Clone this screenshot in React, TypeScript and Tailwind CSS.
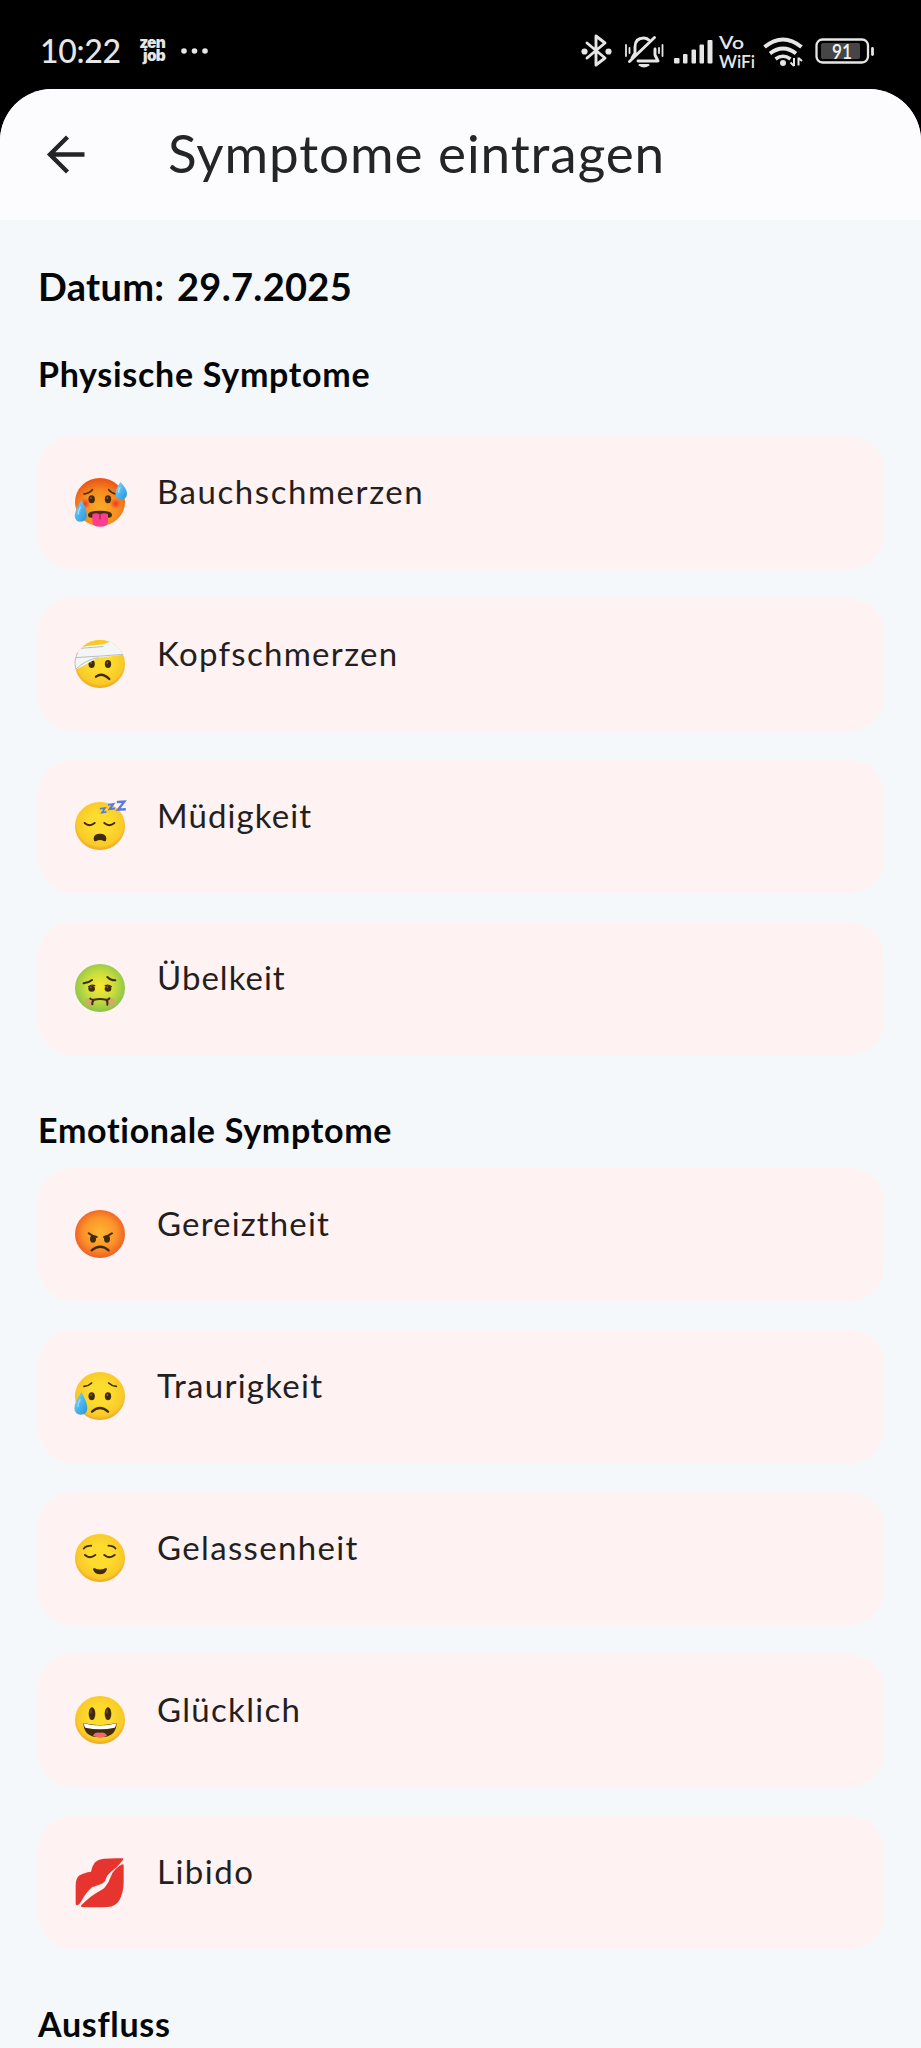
import React from "react";

const INK = "#422b0d";

function FaceGradients() {
  return (
    <svg width="0" height="0" className="absolute" aria-hidden="true">
      <defs>
        <radialGradient id="yellow" cx="50%" cy="45%" r="55%">
          <stop offset="0.4" stopColor="#fddc2e" />
          <stop offset="0.85" stopColor="#f9c928" />
          <stop offset="1" stopColor="#eda524" />
        </radialGradient>
        <radialGradient id="hot" cx="50%" cy="65%" r="62%">
          <stop offset="0.1" stopColor="#f9a825" />
          <stop offset="0.6" stopColor="#f68d20" />
          <stop offset="1" stopColor="#ea5818" />
        </radialGradient>
        <radialGradient id="angry" cx="50%" cy="48%" r="54%">
          <stop offset="0.1" stopColor="#fdb231" />
          <stop offset="0.6" stopColor="#fb9429" />
          <stop offset="1" stopColor="#ee5a24" />
        </radialGradient>
        <radialGradient id="sick" cx="50%" cy="46%" r="54%">
          <stop offset="0" stopColor="#fde62f" />
          <stop offset="0.5" stopColor="#cddf3c" />
          <stop offset="1" stopColor="#8bc34a" />
        </radialGradient>
        <radialGradient id="blush">
          <stop offset="0" stopColor="#f4352a" />
          <stop offset="1" stopColor="#f4352a" stopOpacity="0" />
        </radialGradient>
        <linearGradient id="drop" x1="0" y1="0" x2="1" y2="1">
          <stop offset="0" stopColor="#8fd8f8" />
          <stop offset="0.5" stopColor="#4fb5ee" />
          <stop offset="1" stopColor="#2196dd" />
        </linearGradient>
        <clipPath id="head">
          <ellipse cx="120" cy="108" rx="75" ry="72" />
        </clipPath>
      </defs>
    </svg>
  );
}

function Emoji({ children }: { children: React.ReactNode }) {
  return (
    <svg viewBox="0 0 240 210" className="h-[70px] w-20 shrink-0" fill="none" strokeLinecap="round" strokeLinejoin="round">
      {children}
    </svg>
  );
}

function Head({ fill }: { fill: string }) {
  return <ellipse cx="120" cy="108" rx="75" ry="72" fill={fill} />;
}

function Eyes({ y, rx = 9.5, ry = 12 }: { y: number; rx?: number; ry?: number }) {
  return (
    <>
      <ellipse cx="95" cy={y} rx={rx} ry={ry} fill={INK} />
      <ellipse cx="144" cy={y} rx={rx} ry={ry} fill={INK} />
      <ellipse cx="93" cy={y - 4} rx="2.5" ry="3" fill="#8a6340" />
      <ellipse cx="142" cy={y - 4} rx="2.5" ry="3" fill="#8a6340" />
    </>
  );
}

function HotFace() {
  return (
    <Emoji>
      <Head fill="url(#hot)" />
      <circle cx="75" cy="113" r="17" fill="url(#blush)" />
      <circle cx="167" cy="113" r="17" fill="url(#blush)" />
      <path d="M72 84q16-2 25-13M146 71q9 11 22 13" stroke={INK} strokeWidth="5" />
      <Eyes y={100} />
      <path d="M84 146q0-12 36-12t36 12q0 9-10 9-26-5-52 0-10 0-10-9z" fill={INK} />
      <path d="M97 144q11-5 23 1 12-6 24-1v23q0 15-24 15t-23-15z" fill="#fb3f8c" />
      <path d="M120 143v16" stroke="#b4135b" strokeWidth="3.5" />
      <path d="M181 48q-18 27-14 39 4 13 17 13 17-1 17-17 0-15-20-35z" fill="url(#drop)" />
      <path d="M65 102q-21 32-21 47 1 18 18 18 18 0 18-19 0-18-15-46z" fill="url(#drop)" />
      <path d="M61 124q-7 12-6 20M180 65q-5 8-4 14" stroke="#c6edfc" strokeWidth="4" opacity="0.7" />
    </Emoji>
  );
}

function BandagedFace() {
  return (
    <Emoji>
      <Head fill="url(#yellow)" />
      <Eyes y={108} />
      <path d="M108 146q18-14 40 7" stroke={INK} strokeWidth="7" />
      <g clipPath="url(#head)">
        <path d="M40 63 161 36l29 35v9L115 89l-70 38z" fill="#f4f5f6" />
        <path d="m50 62 98-8 18-14M44 89q70-4 149-10M49 122q28-27 66-33" stroke="#b9bdc1" strokeWidth="3" />
        <path d="M92 34h70l-23 14-88 9z" fill="#f9c928" />
        <path d="m134 47 30-11-7 20-28 2z" fill="#f5f6f7" />
      </g>
      <path d="M52 75q-12 28-4 48" stroke="#a9a8a6" strokeWidth="2" />
    </Emoji>
  );
}

function SleepingFace() {
  return (
    <Emoji>
      <Head fill="url(#yellow)" />
      <path d="M74 99q14 13 30 0M133 99q15 13 30 0" stroke={INK} strokeWidth="6" />
      <path d="M101 146q0-15 19-15t19 15q0 10-8 7-11-6-22 0-8 3-8-7z" fill={INK} />
      <g stroke="#5b78dc" strokeLinecap="square" strokeLinejoin="miter">
        <path d="m122 56 13-2-9 14 11-2" strokeWidth="5" />
        <path d="m147 44 13-2-11 15 13-1" strokeWidth="6" />
        <path d="m174 36 19-1-19 24 20-1" strokeWidth="7" />
      </g>
    </Emoji>
  );
}

function NauseatedFace() {
  return (
    <Emoji>
      <Head fill="url(#sick)" />
      <circle cx="87" cy="151" r="12" fill="#dba56b" opacity="0.85" />
      <circle cx="153" cy="151" r="12" fill="#dba56b" opacity="0.85" />
      <path d="M71 94q16-2 25-10M142 75q9 10 24 10" stroke={INK} strokeWidth="6" />
      <Eyes y={110} rx={10} ry={9} />
      <path d="M86 104q8-7 18-3M136 101q10-4 18 3" stroke={INK} strokeWidth="4" />
      <path d="M91 140q5 5 11 3 18-4 36 0 6 2 10-4M101 144q-5 6-4 13M139 144q5 6 3 14" stroke={INK} strokeWidth="6" />
    </Emoji>
  );
}

function AngryFace() {
  return (
    <Emoji>
      <Head fill="url(#angry)" />
      <ellipse cx="99" cy="123" rx="9" ry="11" fill={INK} />
      <ellipse cx="141" cy="123" rx="9" ry="11" fill={INK} />
      <path d="M86 106q10 8 24 11M156 106q-10 8-24 11" stroke={INK} strokeWidth="6" />
      <path d="M95 157q26-22 51 0" stroke={INK} strokeWidth="7" />
    </Emoji>
  );
}

function SadFace() {
  return (
    <Emoji>
      <Head fill="url(#yellow)" />
      <path d="M72 79q14-1 23-10M146 69q9 9 23 10" stroke={INK} strokeWidth="5" />
      <Eyes y={109} />
      <path d="M96 155q24-22 48 0" stroke={INK} strokeWidth="7" />
      <path d="M64 96q-21 33-21 48 1 20 19 20 20 0 20-20 0-17-18-48z" fill="url(#drop)" />
      <path d="M60 119q-7 12-6 21" stroke="#c6edfc" strokeWidth="4" opacity="0.6" />
    </Emoji>
  );
}

function RelievedFace() {
  return (
    <Emoji>
      <Head fill="url(#yellow)" />
      <path d="M71 80q7-9 23-9M145 71q15 0 22 9" stroke={INK} strokeWidth="5" />
      <path d="M75 99q14 13 31 0M133 99q15 13 31 0" stroke={INK} strokeWidth="6" />
      <path d="M99 142q0-5 5-3 16 7 32 0 6-2 5 3-4 15-21 15t-21-15z" fill={INK} />
    </Emoji>
  );
}

function HappyFace() {
  return (
    <Emoji>
      <Head fill="url(#yellow)" />
      <ellipse cx="96" cy="89" rx="10" ry="19" fill={INK} />
      <ellipse cx="144" cy="89" rx="10" ry="19" fill={INK} />
      <path d="M93 78v9M141 78v9" stroke="#8a6340" strokeWidth="3" />
      <path d="M70 117q50 13 100 0-1 43-50 43t-50-43z" fill={INK} />
      <path d="M71 118q49 13 98 0-1 9-5 13-44 10-88 0-4-4-5-13z" fill="#fff" />
      <path d="M99 155q6-12 21-9 15-3 21 9-21 9-42 0z" fill="#ee6a6c" />
    </Emoji>
  );
}

function Lips() {
  return (
    <Emoji>
      <path d="M188 37q-28-1-56 1-18 1-28 12-7 9-11 27-22 3-34 11-13 9-12 32v49q-1 10 6 9 5-1 11-12 13-26 32-42 21-6 32-12 9-5 11-17 4-10 14-18 20-14 34-33 5-6 1-7z" fill="#e6352f" />
      <path d="M190 55q-8 0-23 14-10 9-16 26-5 15-14 26-7 10-27 19-14 7-45 36-5 6 1 7 42 2 76 0 26-2 37-22 11-21 12-51v-47q0-8-1-8z" fill="#e6352f" />
    </Emoji>
  );
}

const physical = [
  { label: "Bauchschmerzen", Icon: HotFace, spacing: "tracking-[1.55px]" },
  { label: "Kopfschmerzen", Icon: BandagedFace, spacing: "tracking-[1.3px]" },
  { label: "Müdigkeit", Icon: SleepingFace, spacing: "tracking-[1.1px]" },
  { label: "Übelkeit", Icon: NauseatedFace, spacing: "tracking-[1px]" },
];

const emotional = [
  { label: "Gereiztheit", Icon: AngryFace, spacing: "tracking-[1.15px]" },
  { label: "Traurigkeit", Icon: SadFace, spacing: "tracking-[1.25px]" },
  { label: "Gelassenheit", Icon: RelievedFace, spacing: "tracking-[1.35px]" },
  { label: "Glücklich", Icon: HappyFace, spacing: "tracking-[1.3px]" },
  { label: "Libido", Icon: Lips, spacing: "tracking-[1.5px]" },
];

function SymptomList({ items }: { items: typeof physical }) {
  return (
    <ul className="flex flex-col gap-[29px]">
      {items.map(({ label, Icon, spacing }) => (
        <li key={label} className="flex h-[133px] items-start rounded-[34px] bg-[#fef2f3] pl-[22px] pt-[30px]">
          <Icon />
          <span className={`ml-[17px] mt-[5px] text-[33px] leading-[40px] text-[#231f20] ${spacing}`}>{label}</span>
        </li>
      ))}
    </ul>
  );
}

function StatusBar() {
  return (
    <div className="flex h-[89px] shrink-0 items-start justify-between pl-10 pr-[46px] text-[#e6e6e6]">
      <div className="flex pt-[31px]">
        <span className="w-[97px] text-[32px] font-medium leading-[40px] tracking-[-0.3px]">10:22</span>
        <span className="mt-[5px] flex w-[28px] flex-col items-end font-['Inter'] text-[15.5px] font-black leading-[13px] tracking-[-0.8px]">
          <span>zen</span>
          <span>job</span>
        </span>
        <svg viewBox="0 0 28 8" className="ml-[15px] mt-[16px] h-2 w-7" fill="currentColor">
          <circle cx="4" cy="4" r="2.8" />
          <circle cx="14.500" cy="4" r="2.8" />
          <circle cx="25" cy="4" r="2.8" />
        </svg>
      </div>
      <svg viewBox="0 0 294 34" className="mt-[34px] h-[34px] w-[294px] overflow-visible" fill="none" stroke="currentColor" strokeLinecap="round" strokeLinejoin="round">
        <g strokeWidth="2.900">
          <path d="m6 9 18 15-9 7V2l9 7L6 24" />
          <g fill="currentColor" stroke="none">
            <circle cx="3.500" cy="17.500" r="3.100" />
            <circle cx="27.500" cy="17.500" r="3.100" />
          </g>
        </g>
        <g strokeWidth="2.900">
          <path d="M69 7q-3-3-6-3-9 0-9 9v6l-3 5M74 15v6l3 6H57M48.500 27.500 73.500 3.500" />
          <path d="M45 11v11M48.500 14v5M81.500 11v11M78 14v5" strokeWidth="1.800" />
          <path d="M58.500 31q4.500 3 9 0z" strokeWidth="2" fill="currentColor" />
        </g>
        <g fill="currentColor" stroke="none">
          <rect x="93" y="24" width="5.500" height="5.500" rx="1" />
          <rect x="102" y="20" width="4.500" height="9.500" rx="1" />
          <rect x="110.500" y="15.500" width="4.500" height="14" rx="1" />
          <rect x="118.500" y="10.500" width="4.500" height="19" rx="1" />
          <rect x="126.500" y="6" width="5" height="23.500" rx="1" />
        </g>
        <g fill="currentColor" stroke="none" className="font-semibold">
          <text x="138" y="15" fontSize="18" textLength="25" lengthAdjust="spacingAndGlyphs">Vo</text>
          <text x="138" y="33.500" fontSize="18" textLength="36" lengthAdjust="spacingAndGlyphs">WiFi</text>
        </g>
        <g strokeWidth="4" strokeLinecap="butt">
          <path d="M183.500 13q18.500-15 37 0" />
          <path d="M189 19.500q13-10 26 0" />
          <path d="M194.500 25q7.500-5.500 15 0" strokeWidth="3.500" />
          <circle cx="202" cy="29" r="3" fill="currentColor" stroke="none" />
          <path d="M213 32v-8M213 32l-3.500-3.500M217.500 23.500v8M217.500 24l3.500 3" strokeWidth="2" />
        </g>
        <rect x="235.500" y="5.500" width="51.500" height="23" rx="6" strokeWidth="2.300" />
        <rect x="240" y="9" width="39" height="16" rx="2" fill="#464646" stroke="none" />
        <path d="M291.500 14.500v6" strokeWidth="2.800" />
        <text x="261" y="24.500" fontSize="21" textAnchor="middle" fill="#f2f2f2" stroke="none" className="font-semibold" textLength="20" lengthAdjust="spacingAndGlyphs">91</text>
      </svg>
    </div>
  );
}

function SectionTitle({ children, className }: { children: string; className: string }) {
  return <h2 className={`text-[34px] font-bold leading-[40px] tracking-[0.7px] text-[#050608] ${className}`}>{children}</h2>;
}

export default function App() {
  return (
    <div className="flex h-[2048px] w-full flex-col overflow-hidden bg-black font-['Lato','Noto_Sans',sans-serif]">
      <FaceGradients />
      <StatusBar />
      <div className="flex min-h-0 flex-1 flex-col overflow-hidden rounded-t-[52px] bg-[#f4f8fb]">
        <header className="flex h-[131px] shrink-0 items-start bg-[#fcfcff] pl-[46px] pt-[32px] text-[#242528]">
          <svg viewBox="0 0 40 40" className="mt-[14px] h-10 w-10 shrink-0" fill="none" stroke="currentColor" strokeWidth="4.400">
            <path d="M38.500 19.500H5M21.500 2 4 19.500 21.500 37" />
          </svg>
          <h1 className="ml-[82px] text-[53px] leading-[64px] tracking-[0.92px]">Symptome eintragen</h1>
        </header>
        <main className="flex flex-col pl-[38px] pr-[37px] pt-[42px]">
          <p className="text-[38px] font-bold leading-[48px] tracking-[0.3px] text-[#050608] [word-spacing:3px]">Datum: 29.7.2025</p>
          <SectionTitle className="mb-[42px] mt-[44px]">Physische Symptome</SectionTitle>
          <SymptomList items={physical} />
          <SectionTitle className="mb-[18px] mt-[55px]">Emotionale Symptome</SectionTitle>
          <SymptomList items={emotional} />
          <SectionTitle className="mt-[55px]">Ausfluss</SectionTitle>
        </main>
      </div>
    </div>
  );
}
